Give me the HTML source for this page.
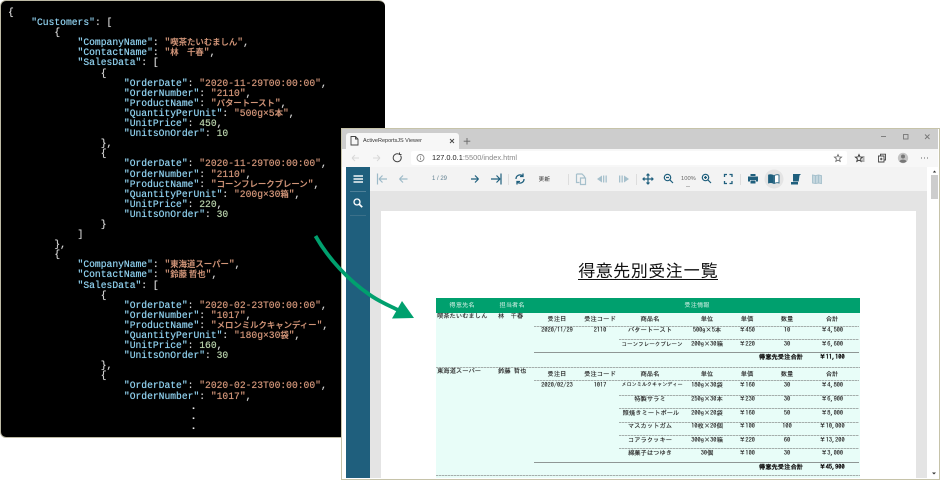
<!DOCTYPE html>
<html lang="ja"><head><meta charset="utf-8"><title>ActiveReportsJS</title>
<style>
html,body{margin:0;padding:0;background:#fff}
#r{position:relative;width:940px;height:480px;overflow:hidden;background:#fff;font-family:"Liberation Sans","Noto Sans CJK JP",sans-serif;filter:blur(.3px)}
#r div,#r span.a,#r svg{position:absolute}
#json{left:0;top:0;width:384px;height:436px;background:#000;border:1px solid #bdbaa5;border-radius:6px;border-right:none}
pre{position:absolute;left:8px;top:8px;margin:0;font:normal 9.67px/10.09px "Liberation Mono",monospace;color:#d4d4d4;text-shadow:0 0 .5px currentColor}
pre b{font-weight:normal;color:#8fd0ee}
pre i{font-style:normal;color:#d09478}
pre u{text-decoration:none;color:#b5cea8}
pre em{font:500 8.4px/0 "Noto Sans CJK JP",sans-serif;color:#d09478}
pre s{text-decoration:none;font-weight:bold;color:#eee;margin-left:3px}
#t{font-family:"IPAGothic","Noto Sans CJK JP",monospace;color:#2a2a2a;font-size:6.3px;text-shadow:0 0 .4px #444}
#t span{position:absolute;transform:translate(-50%,-50%);white-space:nowrap;line-height:8px}
#t span.l{transform:translate(0,-50%)}
#t span.h{color:#d8f2e8;text-shadow:none}
#t span.s{font-size:5.55px}
#t span.x{font-size:5.1px}
#t span.k{font-weight:bold;color:#111}
.ln{height:1px;background:repeating-linear-gradient(90deg,#a4afac 0 2px,#ccd6d3 2px 3px)}
.dk{background:#8f9795}
</style></head><body><div id="r">

<div id="json"></div>
<pre>{
    <b>"Customers"</b>: [
        {
            <b>"CompanyName"</b>: <i>"<em>喫茶たいむましん</em>"</i>,
            <b>"ContactName"</b>: <i>"<em>林　千春</em>"</i>,
            <b>"SalesData"</b>: [
                {
                    <b>"OrderDate"</b>: <i>"2020-11-29T00:00:00"</i>,
                    <b>"OrderNumber"</b>: <i>"2110"</i>,
                    <b>"ProductName"</b>: <i>"<em>バタートースト</em>"</i>,
                    <b>"QuantityPerUnit"</b>: <i>"500g×5<em>本</em>"</i>,
                    <b>"UnitPrice"</b>: <u>450</u>,
                    <b>"UnitsOnOrder"</b>: <u>10</u>
                },
                {
                    <b>"OrderDate"</b>: <i>"2020-11-29T00:00:00"</i>,
                    <b>"OrderNumber"</b>: <i>"2110"</i>,
                    <b>"ProductName"</b>: <i>"<em>コーンフレークブレーン</em>"</i>,
                    <b>"QuantityPerUnit"</b>: <i>"200g×30<em>箱</em>"</i>,
                    <b>"UnitPrice"</b>: <u>220</u>,
                    <b>"UnitsOnOrder"</b>: <u>30</u>
                }
            ]
        },
        {
            <b>"CompanyName"</b>: <i>"<em>東海道スーパー</em>"</i>,
            <b>"ContactName"</b>: <i>"<em>鈴藤 哲也</em>"</i>,
            <b>"SalesData"</b>: [
                {
                    <b>"OrderDate"</b>: <i>"2020-02-23T00:00:00"</i>,
                    <b>"OrderNumber"</b>: <i>"1017"</i>,
                    <b>"ProductName"</b>: <i>"<em>メロンミルクキャンディー</em>"</i>,
                    <b>"QuantityPerUnit"</b>: <i>"180g×30<em>袋</em>"</i>,
                    <b>"UnitPrice"</b>: <u>160</u>,
                    <b>"UnitsOnOrder"</b>: <u>30</u>
                },
                {
                    <b>"OrderDate"</b>: <i>"2020-02-23T00:00:00"</i>,
                    <b>"OrderNumber"</b>: <i>"1017"</i>,
                               <s>.</s>
                               <s>.</s>
                               <s>.</s></pre>

<!-- browser -->
<div style="left:341px;top:128px;width:597px;height:350px;background:#fff;border:1px solid #c6c3a9;border-bottom:2px solid #c6c3a9"></div>
<div style="left:342px;top:129px;width:596px;height:20px;background:#cdcdcd"></div>
<div style="left:346px;top:133px;width:113px;height:16px;background:#f7f7f7;border-radius:3px 3px 0 0"></div>
<div style="left:342px;top:149px;width:596px;height:18px;background:#f7f7f7"></div>
<div style="left:411px;top:151px;width:436px;height:14px;background:#fff;border-radius:2px"></div>
<div style="left:363px;top:136px;font-size:5.5px;line-height:10px;color:#333;white-space:nowrap">ActiveReportsJS Viewer</div>
<div style="left:432px;top:153px;font-size:7.4px;line-height:10px;color:#888;white-space:nowrap"><span style="color:#222">127.0.0.1</span>:5500/index.html</div>

<svg style="left:342px;top:129px" width="596" height="38" viewBox="342 129 596 38" fill="none" stroke="#444" stroke-width=".9">
<path d="M351 136.500h4.500l2.500 2.500v6h-7zM355.500 136.500v2.500h2.500"/>
<path d="M450 139l4 4M454 139l-4 4"/>
<path d="M467 138v6.500M463.700 141.200h6.600" stroke="#666"/>
<path d="M881 136.500h5" stroke="#777"/>
<rect x="903.500" y="134.500" width="4.500" height="4.500" stroke="#777"/>
<path d="M925 134.500l4.500 4.500M929.500 134.500l-4.500 4.500" stroke="#777"/>
<path d="M352 158h7M352 158l3-3M352 158l3 3M373 158h7M380 158l-3-3M380 158l-3 3" stroke="#d8d8d8"/>
<path d="M400.500 155.500a4 4 0 1 1-1.500-1.300M399.500 152.500v2h2" stroke="#444" stroke-width="1"/>
<circle cx="420.500" cy="158" r="3.500" stroke="#888"/><path d="M420.500 157.500v2.300M420.500 155.900v.7" stroke="#888"/>
<path d="M838 154.500l1 2.400 2.600.2-2 1.700.6 2.600-2.200-1.300-2.200 1.300.6-2.600-2-1.700 2.600-.2z" stroke="#666" stroke-width=".8"/>
<path d="M860 154.500l1 2.400 2.600.2-2 1.700.6 2.600-2.200-1.300-2.200 1.300.6-2.600-2-1.700 2.600-.2z" transform="translate(-1 0)" stroke="#333"/><path d="M862.500 157h2M862.500 159h2M862 161h2.500" stroke="#333" stroke-width=".8"/>
<path d="M878.500 156h5.500v6h-5.500zM880.500 156v-1.800h5v5.800h-1.500M880 159h2.500M881.200 157.800v2.400" stroke="#444"/>
<circle cx="903" cy="158" r="5.200" fill="#c4c4c4" stroke="none"/><circle cx="903" cy="156.500" r="2" fill="#777" stroke="none"/><path d="M899.500 161.500c.5-2.500 6.500-2.500 7 0a5 5 0 0 1-7 0z" fill="#777" stroke="none"/>
<path d="M921 158h1M924 158h1M927 158h1" stroke="#666"/>
</svg>

<!-- viewer -->
<div style="left:346px;top:167px;width:24px;height:311px;background:#1f5f7d"></div>
<div style="left:350px;top:191px;width:16px;height:1px;background:#4f8098"></div>
<div style="left:350px;top:215px;width:16px;height:1px;background:#3b7089"></div>
<div style="left:370px;top:167px;width:557px;height:24px;background:#f3f3f3"></div>
<div style="left:370px;top:191px;width:557px;height:287px;background:#e4e4e4"></div>
<div style="left:381px;top:211px;width:535px;height:267px;background:#fff"></div>
<div style="left:927px;top:167px;width:11px;height:311px;background:#fff"></div>
<div style="left:931px;top:175px;width:7px;height:24px;background:#cdcdcd"></div>
<div style="left:432px;top:176px;font-size:6px;line-height:7px;color:#5f7f90;white-space:nowrap">1 / 29</div>
<div style="left:538.500px;top:175px;font-size:5.800px;line-height:8px;color:#333;white-space:nowrap;font-family:'IPAGothic','Noto Sans CJK JP',sans-serif">更新</div>
<div style="left:681px;top:176px;font-size:5.800px;line-height:7px;color:#666;white-space:nowrap">100%</div>
<div style="left:686px;top:186px;width:4px;height:1px;background:#bbb"></div>

<svg style="left:342px;top:167px" width="596" height="60" viewBox="342 167 596 60" fill="none" stroke="#1f5f7d" stroke-width="1.200">
<path d="M353.500 176h9.500M353.500 179h9.500M353.500 182h9.500" stroke="#fff" stroke-width="1.500" opacity=".95"/>
<circle cx="357" cy="202" r="3" stroke="#fff" stroke-width="1.300"/><path d="M359.200 204.200l3 3" stroke="#fff" stroke-width="1.700"/>
<g stroke="#9dbac8"><path d="M377.500 173.500v11M379 179h8M379 179l3.500-3.500M379 179l3.500 3.500"/><path d="M399.500 179h8M399.500 179l3.500-3.500M399.500 179l3.500 3.500"/></g>
<path d="M471 179h7.500M478.500 179l-3.500-3.500M478.500 179l-3.500 3.500"/>
<path d="M491 179h9M500 179l-3.500-3.500M500 179l-3.500 3.500M501 173.500v11"/>
<path d="M516 179a4 4 0 0 1 6.500-3.200M524 179a4 4 0 0 1-6.500 3.200M523 173.500v3h-3M517 184.500v-3h3" stroke-width="1.300"/>
<g stroke="#ddd" stroke-width="1"><path d="M508.500 174v11M568.500 174v11M636.500 174v11M740.500 174v11"/></g>
<g stroke="#a6c0cc"><path d="M576.500 174h5.500l2.500 2.500v1M576.500 174v8.500h3M580.500 178h5v6.500h-5z"/></g>
<g fill="#a6c0cc" stroke="none"><path d="M597 179l5-3.500v7zM603 175.500h1.300v7H603zM605.500 175.500h1.300v7h-1.300zM619 175.500h1.300v7H619zM621.500 175.500h1.300v7h-1.300zM624 175.500l5 3.500-5 3.500z"/></g>
<path d="M648 174v10M643 179h10M646.500 175.500l1.500-1.500 1.500 1.500M646.500 182.500l1.500 1.500 1.500-1.500M644.500 177.500l-1.500 1.500 1.500 1.500M651.500 177.500l1.500 1.500-1.500 1.500" stroke-width="1.200"/>
<circle cx="667.500" cy="177.500" r="3.200"/><path d="M669.800 179.800l3.200 3.200M666 177.500h3" stroke-width="1.200"/>
<circle cx="705.500" cy="177.500" r="3.200"/><path d="M707.800 179.800l3.200 3.200M704 177.500h3M705.500 176v3" stroke-width="1.200"/>
<path d="M724.500 177v-2.500h2.500M729.500 174.500h2.500v2.500M732 181v2.500h-2.500M727 183.500h-2.500v-2.500" stroke-width="1.300"/>
<path d="M750.500 174h5v2h-5z" stroke="none" fill="#1f5f7d"/><path d="M748 176.500h10v5h-2v-1.500h-6v1.500h-2z" stroke="none" fill="#1f5f7d"/><path d="M750.500 180.500h5v3h-5z" fill="#1f5f7d" stroke="none"/>
<circle cx="774" cy="179" r="9.500" fill="#e4e4e4" stroke="none"/>
<path d="M768.500 175c1.800-.6 3.500-.4 5 .4v8c-1.500-.8-3.200-1-5-.4z" fill="#1f5f7d" stroke="#1f5f7d" stroke-width=".8"/><path d="M774.500 175.400c1.500-.8 3-1 4.500-.4v8c-1.500-.6-3-.4-4.500.4z" fill="#fff" stroke="#1f5f7d" stroke-width=".9"/>
<path d="M793 174h8l-1.500 1.500-.8 6h-5.700z" fill="#1f5f7d" stroke="none"/><path d="M791 182h7v2.500h-7z" fill="#1f5f7d" stroke="none"/>
<path d="M812.500 175l3 .6 3-.6 3 .6v8l-3-.6-3 .6-3-.6zM815.500 175.600v8M818.500 175v8" stroke="#a6c0cc" fill="#c4d6de" stroke-width=".9"/>
<path d="M934.500 170.500l-1.700 2h3.400z" fill="#333" stroke="none"/>
</svg>
<svg style="left:930px;top:470px" width="9" height="8"><path d="M2 2.500h4l-2 2z" fill="#333"/></svg>

<!-- report -->
<div style="left:578px;top:262px;font:17.5px/19px 'IPAGothic','Noto Sans CJK JP',sans-serif;color:#111;white-space:nowrap;text-decoration:underline;text-underline-offset:2px">得意先別受注一覧</div>
<div style="left:436px;top:298px;width:424px;height:15px;background:#00a06e"></div>
<div style="left:436px;top:313px;width:424px;height:165px;background:#e8fdf8"></div>
<div class="ln" style="left:534px;top:326px;width:325px"></div>
<div class="ln" style="left:619px;top:339px;width:240px"></div>
<div class="ln dk" style="left:534px;top:352px;width:325px"></div>
<div class="ln" style="left:436px;top:367px;width:424px"></div>
<div class="ln" style="left:534px;top:380px;width:325px"></div>
<div class="ln" style="left:619px;top:395px;width:240px"></div>
<div class="ln" style="left:619px;top:408px;width:240px"></div>
<div class="ln" style="left:619px;top:422px;width:240px"></div>
<div class="ln" style="left:619px;top:435px;width:240px"></div>
<div class="ln" style="left:619px;top:448px;width:240px"></div>
<div class="ln dk" style="left:534px;top:462px;width:325px"></div>
<div class="ln" style="left:436px;top:475px;width:424px"></div>

<div id="t" style="left:0;top:0;width:940px;height:480px">
<span class="h" style="left:462px;top:305px">得意先名</span><span class="h" style="left:512px;top:305px">担当者名</span><span class="h" style="left:697px;top:305px">受注情報</span>
<span class="l" style="left:437px;top:316px">喫茶たいむましん</span><span class="l" style="left:498px;top:316px">林　千春</span>
<span style="left:557px;top:319px">受注日</span><span style="left:600px;top:319px">受注コード</span><span style="left:650px;top:319px">商品名</span><span style="left:707px;top:319px">単位</span><span style="left:747px;top:319px">単価</span><span style="left:787px;top:319px">数量</span><span style="left:832px;top:319px">合計</span>
<span style="left:557px;top:330px">2020/11/29</span><span style="left:600px;top:330px">2110</span><span style="left:650px;top:330px">バタートースト</span><span style="left:707px;top:330px">500g×5本</span><span style="left:747px;top:330px">¥450</span><span style="left:787px;top:330px">10</span><span style="left:832px;top:330px">¥4,500</span>
<span class="s" style="left:652px;top:344px">コーンフレークブレーン</span><span style="left:707px;top:344px">200g×30箱</span><span style="left:747px;top:344px">¥220</span><span style="left:787px;top:344px">30</span><span style="left:832px;top:344px">¥6,600</span>
<span class="k" style="left:781px;top:357px">得意先受注合計</span><span class="k" style="left:832px;top:357px">¥11,100</span>
<span class="l" style="left:437px;top:371px">東海道スーパー</span><span class="l" style="left:498px;top:371px">鈴藤 哲也</span>
<span style="left:557px;top:374px">受注日</span><span style="left:600px;top:374px">受注コード</span><span style="left:650px;top:374px">商品名</span><span style="left:707px;top:374px">単位</span><span style="left:747px;top:374px">単価</span><span style="left:787px;top:374px">数量</span><span style="left:832px;top:374px">合計</span>
<span style="left:557px;top:385px">2020/02/23</span><span style="left:600px;top:385px">1017</span><span class="x" style="left:652px;top:385px">メロンミルクキャンディー</span><span style="left:707px;top:385px">180g×30袋</span><span style="left:747px;top:385px">¥160</span><span style="left:787px;top:385px">30</span><span style="left:832px;top:385px">¥4,800</span>
<span style="left:650px;top:399px">特製サラミ</span><span style="left:707px;top:399px">250g×30本</span><span style="left:747px;top:399px">¥230</span><span style="left:787px;top:399px">30</span><span style="left:832px;top:399px">¥6,900</span>
<span style="left:651px;top:413px">照焼きミートボール</span><span style="left:707px;top:413px">200g×20袋</span><span style="left:747px;top:413px">¥160</span><span style="left:787px;top:413px">50</span><span style="left:832px;top:413px">¥8,000</span>
<span style="left:650px;top:426px">マスカットガム</span><span style="left:707px;top:426px">10枚×20個</span><span style="left:747px;top:426px">¥100</span><span style="left:787px;top:426px">100</span><span style="left:832px;top:426px">¥10,000</span>
<span style="left:650px;top:440px">コアラクッキー</span><span style="left:707px;top:440px">300g×30箱</span><span style="left:747px;top:440px">¥220</span><span style="left:787px;top:440px">60</span><span style="left:832px;top:440px">¥13,200</span>
<span style="left:650px;top:453px">綿菓子はつゆき</span><span style="left:707px;top:453px">30個</span><span style="left:747px;top:453px">¥100</span><span style="left:787px;top:453px">30</span><span style="left:832px;top:453px">¥3,000</span>
<span class="k" style="left:781px;top:467px">得意先受注合計</span><span class="k" style="left:832px;top:467px">¥45,900</span>
</div>

<!-- arrow -->
<svg style="left:0;top:0" width="940" height="480" viewBox="0 0 940 480">
<path d="M315.500 236C328 258 348 280 370 295C380 302 390 306 398 310" fill="none" stroke="#00a06e" stroke-width="3.800"/>
<path d="M392 318.500L402 301L414 318z" fill="#00a06e"/>
</svg>
</div></body></html>
